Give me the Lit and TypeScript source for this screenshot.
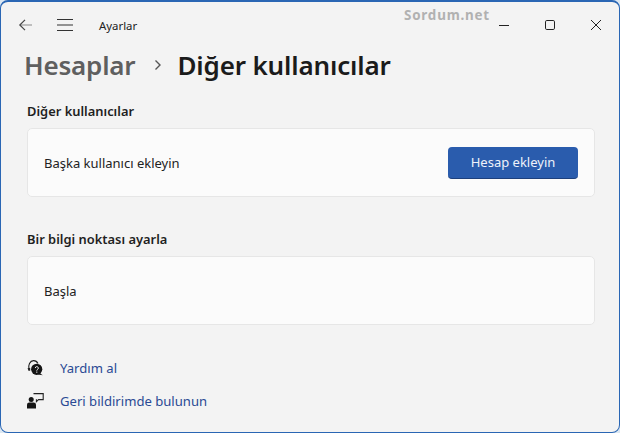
import { LitElement, html, css } from "lit";
import { customElement } from "lit/decorators.js";

@customElement("app-root")
export class AppRoot extends LitElement {
  static styles = css`
    :host { display: block; width: 620px; height: 433px; background: #dce7f1; font-family: "Noto Sans", "Open Sans", sans-serif; color: #1b1b1b; }
    .win { box-sizing: border-box; width: 620px; height: 433px; position: relative; background: #f3f3f3; border: 1px solid #2a66b4; border-top-width: 2px; border-radius: 8px; overflow: hidden; display: flex; flex-direction: column; }
    .bar { height: 45px; display: flex; align-items: center; flex: none; }
    .back { margin-left: 17px; width: 14px; height: 14px; }
    .menu { margin-left: 25px; width: 16px; height: 14px; }
    .app { margin-left: 26px; font-size: 11.4px; color: #222; margin-top: 2px; }
    .caps { margin-left: auto; display: flex; align-items: center; margin-top: 1px; }
    .cap { width: 46px; display: flex; justify-content: center; }
    .mark { position: absolute; left: 403px; top: 4px; font: bold 13.4px "Noto Sans", sans-serif; letter-spacing: 0.8px; color: #b1b1b1; }
    .crumb { display: flex; align-items: center; margin: 0 0 0 23px; height: 36px; flex: none; font-size: 26px; font-weight: 600; letter-spacing: -0.2px; }
    .parent { color: #5f5f5f; }
    .sep { margin: 0 13px 0 17px; width: 12px; height: 12px; }
    .title { letter-spacing: -0.15px; }
    .body { padding: 0 24px 0 26px; display: flex; flex-direction: column; }
    .h { font-size: 12.9px; font-weight: 600; color: #1f1f1f; height: 20px; line-height: 20px; }
    .first { margin-top: 18px; }
    .second { margin-top: 32px; }
    .card { box-sizing: border-box; height: 69px; margin-top: 7px; background: #fbfbfb; border: 1px solid #e6e6e6; border-radius: 5px; display: flex; align-items: center; justify-content: space-between; padding: 0 16px 0 16px; font-size: 13px; color: #222; }
    .btn { box-sizing: border-box; width: 130px; height: 32px; background: #2a5cad; border: none; border-bottom: 1px solid #1c3f7c; border-radius: 4px; color: #eef2fa; font: 13px "Noto Sans", sans-serif; display: flex; align-items: center; justify-content: center; padding: 0; }
    .links { display: flex; flex-direction: column; gap: 14px; margin-top: 33px; }
    .link { display: flex; align-items: center; height: 19px; gap: 15px; font-size: 13.1px; color: #2a4a94; }
    .ico { width: 18px; height: 18px; flex: none; }
  `;

  render() {
    return html`<div class="win">
      <div class="bar">
        <svg class="back" viewBox="0 0 14 14" fill="none" stroke-width="1.2"><path d="M2 7H14" stroke="#8a8a8a"/><path d="M7 1.8L1.8 7L7 12.2" stroke="#444"/></svg>
        <svg class="menu" viewBox="0 0 16 14" fill="none" stroke="#333" stroke-width="1.1"><path d="M0 1.5H16M0 7H16M0 12.5H16"/></svg>
        <span class="app">Ayarlar</span>
        <div class="caps">
          <div class="cap"><svg width="12" height="12" viewBox="0 0 12 12" stroke="#222" fill="none"><path d="M1 6.5H11"/></svg></div>
          <div class="cap"><svg width="12" height="12" viewBox="0 0 12 12" stroke="#222" fill="none"><rect x="1.5" y="1.5" width="9" height="9" rx="1.3"/></svg></div>
          <div class="cap"><svg width="12" height="12" viewBox="0 0 12 12" stroke="#222" fill="none"><path d="M1 1L11 11M11 1L1 11"/></svg></div>
        </div>
      </div>
      <div class="mark">Sordum.net</div>
      <div class="crumb">
        <span class="parent">Hesaplar</span>
        <svg class="sep" viewBox="0 0 12 12" fill="none" stroke="#555" stroke-width="1.4"><path d="M3.5 1.5L8 6L3.5 10.5"/></svg>
        <span class="title">Diğer kullanıcılar</span>
      </div>
      <div class="body">
        <div class="h first">Diğer kullanıcılar</div>
        <div class="card"><span>Başka kullanıcı ekleyin</span><button class="btn">Hesap ekleyin</button></div>
        <div class="h second">Bir bilgi noktası ayarla</div>
        <div class="card"><span>Başla</span></div>
        <div class="links">
          <div class="link">
            <svg class="ico" viewBox="0 0 18 18"><path d="M2 10.5C.8 6 3 1.8 6.5 1.6C8.5 1.5 10 2.5 11 4.5" fill="none" stroke="#222" stroke-width="1.1"/><path d="M0.6 9H3.2V11.8H1.4Z" fill="#222"/><circle cx="9.7" cy="10.3" r="5.6" fill="#151515"/><path d="M12.5 14L15.8 16.2L11 15.5Z" fill="#151515"/><path d="M8.3 9.1a1.5 1.5 0 1 1 2.1 1.4c-.5.3-.6.5-.6 1.1" fill="none" stroke="#fff" stroke-width="1"/><circle cx="9.8" cy="13.1" r=".7" fill="#fff"/></svg>
            <span>Yardım al</span>
          </div>
          <div class="link">
            <svg class="ico" viewBox="0 0 18 18"><circle cx="4.2" cy="7.6" r="2.5" fill="#151515"/><path d="M0 16.5V12.8A2.3 2.3 0 0 1 2.3 10.5H6.7A2.3 2.3 0 0 1 9 12.8V16.5Z" fill="#151515"/><path d="M6.5 1.6H16.2V7.6H11.5L9.4 9.6V7.2" fill="none" stroke="#222" stroke-width="1.1"/></svg>
            <span>Geri bildirimde bulunun</span>
          </div>
        </div>
      </div>
    </div>`;
  }
}
